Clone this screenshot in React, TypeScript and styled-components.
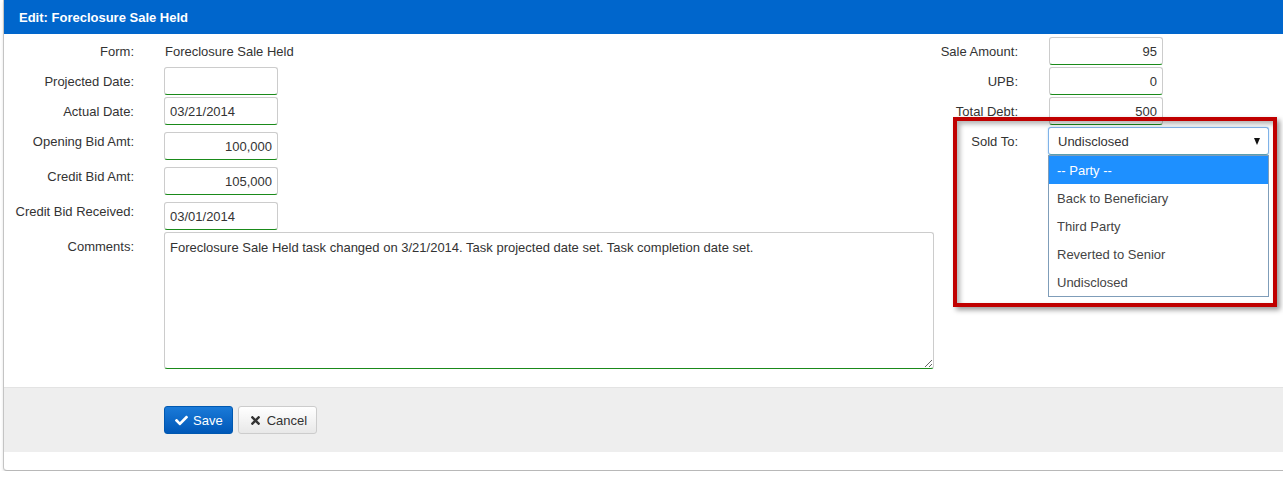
import React from "react";
import styled, { createGlobalStyle, css } from "styled-components";
import { FaCheck, FaTimes } from "react-icons/fa";

const GlobalStyle = createGlobalStyle`
  html, body {
    margin: 0;
    padding: 0;
    background: #ffffff;
    overflow: hidden;
    font-family: "Liberation Sans", Arial, sans-serif;
    font-size: 13px;
    color: #333333;
  }
  * { box-sizing: border-box; }
`;

const Panel = styled.div`
  margin-left: 3px;
  width: 1300px;
  border-left: 1px solid #c4c4c4;
  border-bottom: 1px solid #b8b8b8;
  border-bottom-left-radius: 4px;
  box-shadow: 0 2px 3px rgba(0, 0, 0, 0.12);
  padding-bottom: 18px;
  background: #ffffff;
`;

const Header = styled.div`
  height: 34px;
  background: #0066cc;
  display: flex;
  align-items: center;
  padding-left: 15px;
`;

const Title = styled.h1`
  margin: 0;
  font-size: 13px;
  font-weight: bold;
  color: #ffffff;
`;

const Body = styled.div`
  display: flex;
  padding: 3px 0 18px 0;
`;

const LeftCol = styled.div`
  width: 930px;
  display: flex;
  flex-direction: column;
`;

const RightCol = styled.div`
  position: relative;
  display: flex;
  flex-direction: column;
`;

const Row = styled.div<{ $mt?: number }>`
  display: flex;
  align-items: flex-start;
  margin-top: ${(p) => p.$mt ?? 0}px;
`;

const Label = styled.label<{ $w: number; $top?: boolean }>`
  width: ${(p) => p.$w}px;
  flex-shrink: 0;
  margin-right: ${(p) => (p.$w > 100 ? 30 : 31)}px;
  text-align: right;
  padding-top: 1px;
  line-height: ${(p) => (p.$top ? 17 : 27)}px;
  color: #333333;
`;

const StaticValue = styled.div`
  line-height: 27px;
  padding-top: 1px;
  padding-left: 1px;
  color: #333333;
`;

const fieldBase = css`
  font-family: "Liberation Sans", Arial, sans-serif;
  font-size: 13px;
  color: #333333;
  background: #ffffff;
  border: 1px solid #cccccc;
  border-bottom-color: #1a8a1a;
  border-radius: 3px;
`;

const Input = styled.input<{ $right?: boolean }>`
  ${fieldBase}
  width: 114px;
  height: 28px;
  padding: 0 5px;
  text-align: ${(p) => (p.$right ? "right" : "left")};
  outline: none;
`;

const TextArea = styled.textarea`
  ${fieldBase}
  width: 771px;
  height: 137px;
  padding: 7px 5px;
  line-height: 16px;
  resize: both;
  outline: none;
`;

const SelectWrap = styled.div`
  position: relative;
  width: 221px;
  margin-left: -1px;
`;

const SelectBox = styled.div`
  height: 28px;
  border: 1px solid #7fb2e8;
  border-bottom-color: #5a9fb0;
  border-radius: 3px;
  background: #ffffff;
  display: flex;
  align-items: center;
  justify-content: space-between;
  padding: 1px 8px 0 9px;
  box-shadow: 0 0 2px rgba(102, 175, 233, 0.5);
`;

const Arrow = styled.span`
  width: 0;
  height: 0;
  border-left: 3.5px solid transparent;
  border-right: 3.5px solid transparent;
  border-top: 7px solid #111111;
`;

const OptionList = styled.ul`
  position: absolute;
  top: 100%;
  left: 0;
  width: 221px;
  margin: 0;
  padding: 0;
  list-style: none;
  background: #ffffff;
  border: 1px solid #7f9db9;
  z-index: 5;
`;

const OptionItem = styled.li<{ $active?: boolean }>`
  height: 28px;
  line-height: 27px;
  padding: 1px 0 0 8px;
  color: ${(p) => (p.$active ? "#ffffff" : "#444444")};
  background: ${(p) => (p.$active ? "#1e90ff" : "transparent")};
`;

const Annotation = styled.div`
  position: absolute;
  left: 19px;
  top: 80px;
  width: 324px;
  height: 190px;
  border: 4px solid #c00000;
  box-shadow: 3px 3px 5px rgba(0, 0, 0, 0.4),
    inset 3px 3px 5px rgba(0, 0, 0, 0.3);
  pointer-events: none;
  z-index: 10;
`;

const Footer = styled.div`
  border-top: 1px solid #e3e3e3;
  background: #eeeeee;
  padding: 18px 0 18px 160px;
  display: flex;
  gap: 5px;
`;

const Button = styled.button<{ $primary?: boolean }>`
  height: 28px;
  display: inline-flex;
  align-items: center;
  gap: 5px;
  font-family: "Liberation Sans", Arial, sans-serif;
  font-size: 13px;
  border-radius: 3px;
  cursor: pointer;
  padding: 0 9px 0 10px;
  ${(p) =>
    p.$primary
      ? css`
          color: #ffffff;
          border: 1px solid #0058b0;
          background: linear-gradient(#1a7ad8, #0058b8);
        `
      : css`
          color: #333333;
          border: 1px solid #cccccc;
          background: linear-gradient(#ffffff, #e8e8e8);
        `}
  svg {
    font-size: 13px;
  }
`;

const leftRows = [
  { label: "Projected Date:", value: "", right: false, mt: 2, top: false },
  { label: "Actual Date:", value: "03/21/2014", right: false, mt: 2, top: false },
  { label: "Opening Bid Amt:", value: "100,000", right: true, mt: 7, top: true },
  { label: "Credit Bid Amt:", value: "105,000", right: true, mt: 7, top: true },
  { label: "Credit Bid Received:", value: "03/01/2014", right: false, mt: 7, top: true },
];

const rightRows = [
  { label: "Sale Amount:", value: "95" },
  { label: "UPB:", value: "0" },
  { label: "Total Debt:", value: "500" },
];

const options = [
  "-- Party --",
  "Back to Beneficiary",
  "Third Party",
  "Reverted to Senior",
  "Undisclosed",
];

export default function App() {
  return (
    <>
      <GlobalStyle />
      <Panel>
        <Header>
          <Title>Edit: Foreclosure Sale Held</Title>
        </Header>
        <Body>
          <LeftCol>
            <Row>
              <Label $w={130}>Form:</Label>
              <StaticValue>Foreclosure Sale Held</StaticValue>
            </Row>
            {leftRows.map((r) => (
              <Row key={r.label} $mt={r.mt}>
                <Label $w={130} $top={r.top}>
                  {r.label}
                </Label>
                <Input $right={r.right} defaultValue={r.value} />
              </Row>
            ))}
            <Row $mt={2}>
              <Label $w={130}>Comments:</Label>
              <TextArea defaultValue="Foreclosure Sale Held task changed on 3/21/2014. Task projected date set. Task completion date set." />
            </Row>
          </LeftCol>
          <RightCol>
            {rightRows.map((r, i) => (
              <Row key={r.label} $mt={i === 0 ? 0 : 2}>
                <Label $w={84}>{r.label}</Label>
                <Input $right defaultValue={r.value} />
              </Row>
            ))}
            <Row $mt={2}>
              <Label $w={84}>Sold To:</Label>
              <SelectWrap>
                <SelectBox>
                  <span>Undisclosed</span>
                  <Arrow />
                </SelectBox>
                <OptionList>
                  {options.map((o, i) => (
                    <OptionItem key={o} $active={i === 0}>
                      {o}
                    </OptionItem>
                  ))}
                </OptionList>
              </SelectWrap>
            </Row>
            <Annotation />
          </RightCol>
        </Body>
        <Footer>
          <Button $primary>
            <FaCheck />
            Save
          </Button>
          <Button>
            <FaTimes />
            Cancel
          </Button>
        </Footer>
      </Panel>
    </>
  );
}
